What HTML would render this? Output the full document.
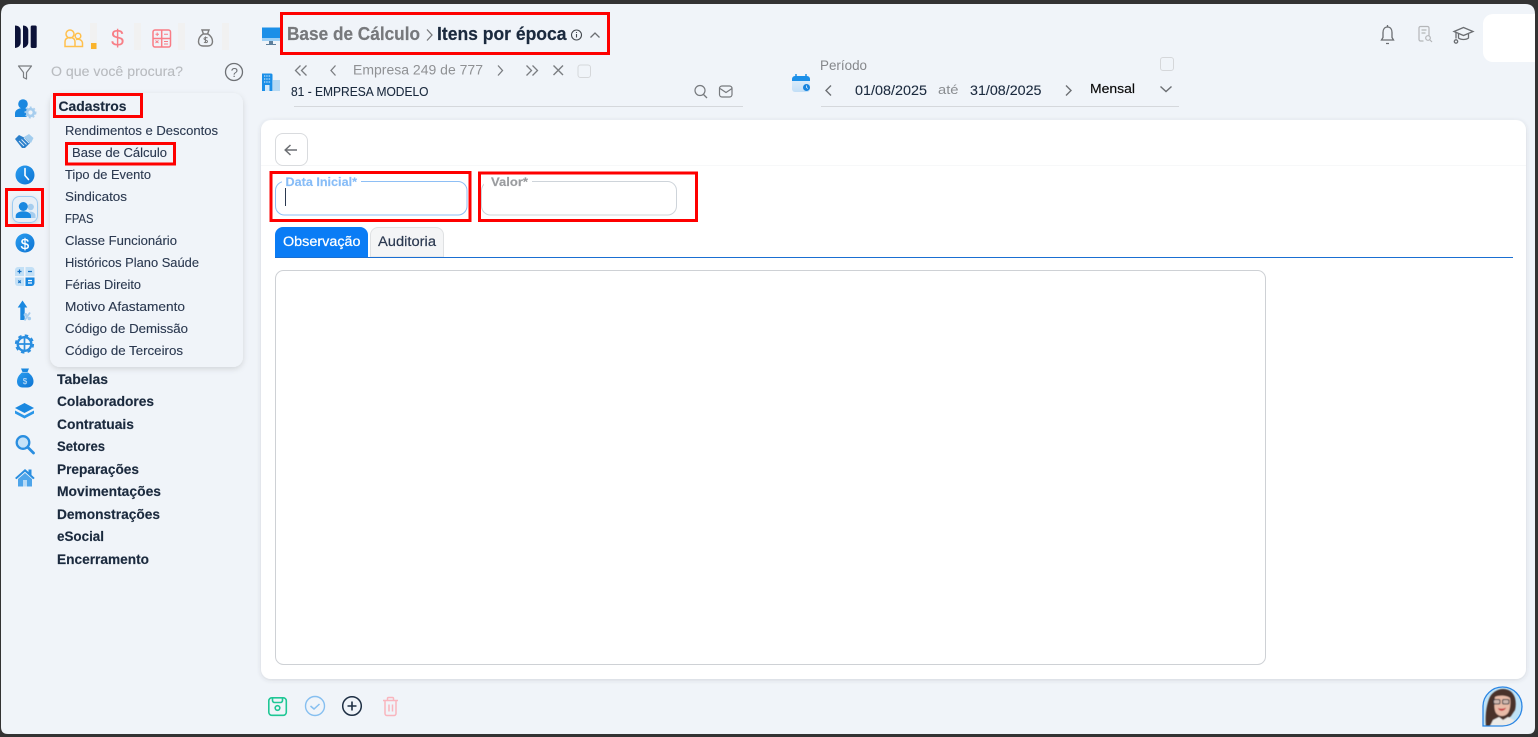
<!DOCTYPE html>
<html lang="pt-BR"><head><meta charset="utf-8"><title>Base de Cálculo</title>
<style>
html,body{margin:0;padding:0;width:1538px;height:737px;overflow:hidden;background:#333}
svg{display:block;position:absolute;left:0;top:0}
text{font-family:"Liberation Sans",sans-serif}
.b{font-weight:700;fill:#1b2a3e;font-size:13.5px;stroke:#1b2a3e;stroke-width:.15px}
.i{fill:#2b3950;font-size:12.8px;stroke:#2b3950;stroke-width:.12px}
.g{fill:#8a8d91;font-size:13.500px}
</style></head><body>
<svg width="1538" height="737" viewBox="0 0 1538 737" xmlns="http://www.w3.org/2000/svg">
<defs>
<linearGradient id="bl" x1="0" y1="0" x2="1" y2="1"><stop offset="0" stop-color="#2a9df0"/><stop offset="1" stop-color="#0f74d2"/></linearGradient>
<linearGradient id="cal" x1="0" y1="0" x2="0" y2="1"><stop offset="0" stop-color="#d9ebfa"/><stop offset="1" stop-color="#c2def6"/></linearGradient>
<filter id="sh" x="-10%" y="-10%" width="120%" height="120%"><feDropShadow dx="0" dy="2" stdDeviation="3" flood-color="#000" flood-opacity=".13"/></filter>
<filter id="sh2" x="-3%" y="-3%" width="106%" height="106%"><feDropShadow dx="0" dy="1" stdDeviation="2" flood-color="#445" flood-opacity=".18"/></filter>
<filter id="soft"><feGaussianBlur stdDeviation=".55"/></filter>
<clipPath id="av"><path d="M1483 726V706a19.500 19.500 0 1 1 19.500 20z"/></clipPath>
</defs>
<!-- page -->
<path d="M1 14Q1 4 11 4H1525Q1535 4 1535 14V727Q1535 734 1528 734H8Q1 734 1 727z" fill="#f0f4f9"/>

<!-- logo -->
<g fill="#0c1238">
<path d="M15 25.500c3.500 0 5.700 2 5.700 5v12c0 3-2.200 5-5.700 5.500z"/>
<path d="M23 25.500c3 0 5.300 2 5.300 5v12c0 2.500-2.300 5-5.300 5.500z"/>
<rect x="30.700" y="25.500" width="6" height="22.500" rx="1.500"/>
</g>

<!-- top module icons -->
<g fill="none" stroke="#ffc04d" stroke-width="1.500">
<circle cx="70" cy="34" r="4"/><circle cx="78" cy="36" r="2.800"/>
<path d="M65 46.500v-4.500c0-3 2-4.500 5-4.500s5 1.500 5 4.500v4.500zM76 39.500c4-.8 6.500 1 6.500 4v3h-7.500"/>
</g>
<rect x="90" y="23" width="7" height="27" fill="#f1f1f1"/><rect x="91" y="43" width="5.500" height="6" fill="#f9b32d"/>
<text x="111" y="46" font-size="23" fill="#f77f87" textLength="13" lengthAdjust="spacingAndGlyphs">$</text>
<rect x="134" y="23" width="7" height="27" fill="#f1f1f1"/>
<g fill="none" stroke="#f97c86" stroke-width="1.500">
<rect x="153" y="30" width="17.500" height="17" rx="2"/><path d="M153 38.500h17.500M161.700 30v17"/>
<path d="M155.500 34.300h3.500M157.200 32.500v3.500M164 34.300h4M155.500 43l3-2.500M155.500 40.500l3 2.500M164 41.500h4M164 44h4" stroke-width="1"/>
</g>
<rect x="178" y="23" width="7" height="27" fill="#f1f1f1"/>
<g fill="none" stroke="#7d7d7d" stroke-width="1.400">
<path d="M202 30h7l-1.500 4h-4zM203 34c-3 2-4.500 5-4.500 7.500 0 3 2 4.500 4.500 4.500h5c2.500 0 4.500-1.500 4.500-4.500 0-2.500-1.500-5.500-4.500-7.500"/>
<path d="M207.500 38c-.8-.8-3.500-.8-3.500.8s3.500 1 3.500 2.600-2.700 1.500-3.500.6M205.500 36.500v6.500" stroke-width="1"/>
</g>
<rect x="222" y="23" width="7" height="27" fill="#f1f1f1"/>

<!-- filter / search -->
<path d="M18.500 66h13l-5 6.500v6.500l-3-1.500v-5z" fill="none" stroke="#7b7e82" stroke-width="1.200" stroke-linejoin="round"/>
<text x="51" y="76" font-size="13.500" fill="#b8bbbf" stroke="#b8bbbf" stroke-width=".1" textLength="132" lengthAdjust="spacingAndGlyphs">O que você procura?</text>
<circle cx="234" cy="72" r="8.500" fill="none" stroke="#6f7276" stroke-width="1.300"/>
<text x="230.700" y="77" font-size="13" fill="#6f7276">?</text>

<!-- side icons -->
<g>
<circle cx="23" cy="104" r="4.800" fill="#1a88e0"/>
<path d="M15 117v-3.500c0-3.500 3.500-5.500 8-5.500 2 0 3.500.4 4.500 1.200-1.500 2-1.800 5.200-.5 7.800z" fill="#1a88e0"/>
<circle cx="30.500" cy="112.500" r="3.400" fill="none" stroke="#a6cdee" stroke-width="2.600"/>
<circle cx="30.500" cy="112.500" r="5.300" fill="none" stroke="#a6cdee" stroke-width="1.300" stroke-dasharray="2 2"/>
</g>
<g>
<path d="M15 139L19 135L27 139L30 143L25 148L22 148Z" fill="#2a7fcb"/>
<path d="M24 137L29 134L33.500 138L31 143L28 141Z" fill="#a3cdee"/>
<path d="M19 141l5 5M21.500 139.500l5 5M24 138l5 5" stroke="#dcebf8" stroke-width=".9"/>
</g>
<circle cx="25" cy="175" r="9.500" fill="url(#bl)"/>
<path d="M25 168.500v7l3.500 4" fill="none" stroke="#fff" stroke-width="1.600" stroke-linecap="round"/>

<!-- active -->
<rect x="12.500" y="196.500" width="25" height="26" rx="7" fill="#e7eff7" stroke="#9ccbf2" stroke-width="1" filter="url(#sh)"/>
<circle cx="30.700" cy="207" r="3.200" fill="#a6cdee"/>
<path d="M29 211.500c4 0 6.500 1.700 6.500 4v2.500h-5v-2c0-2-.5-3.500-1.500-4.500z" fill="#a6cdee"/>
<circle cx="23.300" cy="206.500" r="4.500" fill="#1a88e0"/>
<path d="M15.700 218v-2c0-3 3.400-4.800 7.600-4.800s7.700 1.800 7.700 4.800v2z" fill="#1a88e0"/>

<circle cx="25" cy="243" r="9.500" fill="url(#bl)"/>
<text x="20.700" y="248.800" font-size="15" fill="#fff" stroke="#fff" stroke-width=".3">$</text>

<g>
<path d="M15 270a3 3 0 0 1 3-3h6v9h-9z" fill="#c3e0f6"/>
<path d="M25.500 267h6a3 3 0 0 1 3 3v6h-9z" fill="#c3e0f6"/>
<path d="M15 277.500h9v8.500h-6a3 3 0 0 1-3-3z" fill="#c3e0f6"/>
<path d="M25.500 277.500h9v5.500a3 3 0 0 1-3 3h-6z" fill="#1a88e0"/>
<path d="M17.500 271.500h4M19.500 269.500v4M28 271.500h4M18.300 280.500l2.500 2.500M20.800 280.500l-2.500 2.500" stroke="#1270c5" stroke-width="1.200"/>
<path d="M28 280.500h4M28 283h4" stroke="#fff" stroke-width="1.200"/>
</g>
<g>
<path d="M22.500 300.500l4.800 7h-2.600v12.500h-4.400v-12.500h-2.600z" fill="#1a88e0"/>
<path d="M24.500 320.500l5.500-8" stroke="#a6cdee" stroke-width="1.800"/>
<circle cx="25.500" cy="314.800" r="1.800" fill="#a6cdee"/><circle cx="29.300" cy="318.500" r="1.800" fill="#a6cdee"/>
</g>
<g fill="none">
<circle cx="24.500" cy="344" r="6.800" stroke="#2a8ee0" stroke-width="2.400"/>
<circle cx="24.500" cy="344" r="8.600" stroke="#2a8ee0" stroke-width="2" stroke-dasharray="3.500 3.250"/>
<path d="M24.500 337v14M17.500 344h14" stroke="#2a8ee0" stroke-width="1.700"/>
</g>
<g>
<path d="M21 368.500h8l-1.500 3.500h-5z" fill="#1a88e0"/>
<path d="M22 372.500h6c3 2 5.500 5 5.500 9 0 4-3 6-6 6h-5c-3 0-5.500-2-5.500-6 0-4 2.500-7 5-9z" fill="url(#bl)"/>
<text x="22.700" y="384" font-size="8" fill="#cfe6f9">$</text>
</g>
<g>
<path d="M24.500 403l9.500 5-9.500 5-9.500-5z" fill="#1a88e0"/>
<path d="M15 410.500l9.500 5 9.500-5v3l-9.500 5-9.500-5z" fill="#2a96e8"/>
</g>
<g fill="none">
<circle cx="23" cy="442.500" r="6.300" stroke="#2a8ee0" stroke-width="2.300" fill="#c5e2f8"/>
<path d="M28 447.500l5.500 5.500" stroke="#2a8ee0" stroke-width="2.800" stroke-linecap="round"/>
</g>
<g>
<path d="M15 478l10-9 3.500 3v-2.500h3v5.500l3.200 3-1.500 1.200-8.200-7.500-8.500 7.500z" fill="#2a8ee0"/>
<path d="M18 479l7-6 7 6v7.500h-14z" fill="#4fa5ea"/>
<rect x="23" y="480" width="4" height="6.500" fill="#b7daf6"/>
</g>

<!-- menu bold -->
<g class="menu">
<text class="b" x="57" y="384" textLength="51" lengthAdjust="spacingAndGlyphs">Tabelas</text>
<text class="b" x="57" y="406" textLength="97" lengthAdjust="spacingAndGlyphs">Colaboradores</text>
<text class="b" x="57" y="429" textLength="77" lengthAdjust="spacingAndGlyphs">Contratuais</text>
<text class="b" x="57" y="451" textLength="48" lengthAdjust="spacingAndGlyphs">Setores</text>
<text class="b" x="57" y="474" textLength="82" lengthAdjust="spacingAndGlyphs">Preparações</text>
<text class="b" x="57" y="496" textLength="104" lengthAdjust="spacingAndGlyphs">Movimentações</text>
<text class="b" x="57" y="519" textLength="103" lengthAdjust="spacingAndGlyphs">Demonstrações</text>
<text class="b" x="57" y="541" textLength="47" lengthAdjust="spacingAndGlyphs">eSocial</text>
<text class="b" x="57" y="564" textLength="92" lengthAdjust="spacingAndGlyphs">Encerramento</text>
</g>

<!-- popup -->
<rect x="50" y="93" width="193" height="274" rx="10" fill="#f0f4f9" filter="url(#sh)"/>
<text class="b" x="58.500" y="111" textLength="68" lengthAdjust="spacingAndGlyphs">Cadastros</text>
<text class="i" x="65" y="135" textLength="153" lengthAdjust="spacingAndGlyphs">Rendimentos e Descontos</text>
<text class="i" x="72" y="157" textLength="95" lengthAdjust="spacingAndGlyphs">Base de Cálculo</text>
<text class="i" x="65" y="179" textLength="86" lengthAdjust="spacingAndGlyphs">Tipo de Evento</text>
<text class="i" x="65" y="201" textLength="62" lengthAdjust="spacingAndGlyphs">Sindicatos</text>
<text class="i" x="65" y="223" textLength="28.500" lengthAdjust="spacingAndGlyphs">FPAS</text>
<text class="i" x="65" y="245" textLength="112" lengthAdjust="spacingAndGlyphs">Classe Funcionário</text>
<text class="i" x="65" y="267" textLength="134" lengthAdjust="spacingAndGlyphs">Históricos Plano Saúde</text>
<text class="i" x="65" y="289" textLength="76" lengthAdjust="spacingAndGlyphs">Férias Direito</text>
<text class="i" x="65" y="311" textLength="120" lengthAdjust="spacingAndGlyphs">Motivo Afastamento</text>
<text class="i" x="65" y="333" textLength="123" lengthAdjust="spacingAndGlyphs">Código de Demissão</text>
<text class="i" x="65" y="355" textLength="118" lengthAdjust="spacingAndGlyphs">Código de Terceiros</text>

<!-- header -->
<path d="M262 27.500h18v13.500h-18z" fill="#1b8fe8"/><path d="M262 38h18v3h-18z" fill="#9ccff5"/>
<path d="M269 41h4v3h3v1h-10v-1h3z" fill="#5d7f9c"/>
<text x="287" y="40" font-size="18" font-weight="700" fill="#77797c" stroke="#77797c" stroke-width=".2" textLength="133" lengthAdjust="spacingAndGlyphs">Base de Cálculo</text>
<path d="M427 29.500l5 5.500-5 5.500" fill="none" stroke="#77797c" stroke-width="1.300"/>
<text x="437" y="40" font-size="18" font-weight="700" fill="#1b2a3e" stroke="#1b2a3e" stroke-width=".2" textLength="129.500" lengthAdjust="spacingAndGlyphs">Itens por época</text>
<circle cx="576.500" cy="35" r="5" fill="none" stroke="#454a50" stroke-width="1.100"/><path d="M576.500 34v3.500M576.500 32v1" stroke="#454a50" stroke-width="1.100"/>
<path d="M590.500 37.500l4.500-4.500 4.500 4.500" fill="none" stroke="#6b6e72" stroke-width="1.300"/>

<!-- building -->
<path d="M262 73.500h9a1.500 1.500 0 0 1 1.500 1.500v16h-10.500z" fill="#1b8fe8"/>
<path d="M273 80h7v11h-7z" fill="#b5d9f4"/>
<path d="M264 76h7M264 79h7M264 82h7" stroke="#bfe0f8" stroke-width="1.300" stroke-dasharray="1.300 1"/><rect x="265" y="85" width="4.500" height="6" fill="#d6eafa"/>

<!-- empresa nav -->
<g fill="none" stroke="#7a7d81" stroke-width="1.300">
<path d="M300.500 65.500l-5 5 5 5M306.500 65.500l-5 5 5 5M335.500 65.500l-4.500 5 4.500 5M498 65.500l4.500 5-4.500 5M526.500 65.500l5 5-5 5M532.500 65.500l5 5-5 5"/>
<path d="M553.500 65.500l9.500 9.500M563 65.500l-9.500 9.500" stroke-width="1.400"/>
<rect x="578" y="65" width="12.500" height="12.500" rx="2.500" stroke="#d5d7da" stroke-width="1"/>
</g>
<text class="g" x="353" y="74.500" textLength="130" lengthAdjust="spacingAndGlyphs" style="fill:#8f9194">Empresa 249 de 777</text>
<text x="291" y="96" font-size="13.200" fill="#1b2a3e" stroke="#1b2a3e" stroke-width=".1" textLength="137.500" lengthAdjust="spacingAndGlyphs">81 - EMPRESA MODELO</text>
<circle cx="700" cy="90.500" r="5" fill="none" stroke="#777a7e" stroke-width="1.200"/><path d="M703.500 94.500l3.500 3.500" stroke="#777a7e" stroke-width="1.300"/>
<rect x="719.500" y="86" width="12.500" height="11" rx="2.500" fill="none" stroke="#777a7e" stroke-width="1.200"/><path d="M720 88.500l6 4 6-4" fill="none" stroke="#777a7e" stroke-width="1.200"/>
<path d="M294 106.500h449M821 106.500h358" stroke="#d5d8dc" stroke-width="1"/>

<!-- period -->
<path d="M792 81h18v8a3 3 0 0 1-3 3h-12a3 3 0 0 1-3-3z" fill="url(#cal)"/>
<path d="M792 79a3 3 0 0 1 3-3h12a3 3 0 0 1 3 3v2h-18z" fill="#1b8fe8"/>
<path d="M796 74v3M806 74v3" stroke="#1b8fe8" stroke-width="1.500"/>
<circle cx="806.500" cy="87.500" r="3.500" fill="#1583de"/>
<path d="M806.500 85.500v2l1.300 1" fill="none" stroke="#fff" stroke-width=".7"/>
<text class="g" x="820" y="70" textLength="47" lengthAdjust="spacingAndGlyphs" style="fill:#85878b">Período</text>
<rect x="1160.500" y="57.500" width="13" height="13" rx="2.500" fill="none" stroke="#d5d7da"/>
<g fill="none" stroke="#6c6f73" stroke-width="1.400">
<path d="M831 85.500l-5 5 5 5M1066 85.500l5 5-5 5M1160.500 86.500l5.500 5 5.500-5"/>
</g>
<text x="855" y="95" font-size="13.500" fill="#1b2a3e" stroke="#1b2a3e" stroke-width=".1" textLength="72" lengthAdjust="spacingAndGlyphs">01/08/2025</text>
<text x="938" y="94" font-size="13" fill="#8a8d91" textLength="20.500" lengthAdjust="spacingAndGlyphs">até</text>
<text x="970" y="95" font-size="13.500" fill="#1b2a3e" stroke="#1b2a3e" stroke-width=".1" textLength="71.500" lengthAdjust="spacingAndGlyphs">31/08/2025</text>
<text x="1090" y="93" font-size="13" fill="#0a0a0a" stroke="#0a0a0a" stroke-width=".15" textLength="45" lengthAdjust="spacingAndGlyphs">Mensal</text>

<!-- top right -->
<g fill="none" stroke="#6b6e72" stroke-width="1.300">
<path d="M1387.500 27c3 0 4.500 2.500 4.500 5.500v5l1.500 2.500h-12l1.500-2.500v-5c0-3 1.500-5.500 4.500-5.500z"/>
<path d="M1386 43.500h3M1387.500 25v2"/>
</g>
<g fill="none" stroke="#b4b6b9" stroke-width="1.200">
<path d="M1429 36v-8a1.500 1.500 0 0 0-1.500-1.500h-7a1.500 1.500 0 0 0-1.500 1.500v11.500a1.500 1.500 0 0 0 1.500 1.500h3"/>
<path d="M1421.500 30h5M1421.500 33h4"/><circle cx="1428" cy="38" r="2.300"/><path d="M1430 40l2 2"/>
</g>
<g fill="none" stroke="#6b6e72" stroke-width="1.300">
<path d="M1463.500 27.500l9.500 4-9.500 4-9.500-4z"/>
<path d="M1458.500 34v4c2.500 2 7.500 2 10 0v-4"/><path d="M1456 32.500v6"/><circle cx="1456" cy="41.500" r="1.700"/>
</g>
<path d="M1483 24a10 10 0 0 1 10-10h42v48h-42a10 10 0 0 1-10-10z" fill="#fff"/>

<!-- card -->
<rect x="261" y="120" width="1265" height="559" rx="10" fill="#fff" filter="url(#sh2)"/>
<path d="M261 165.500h1265" stroke="#f7f8f9"/>
<rect x="275.500" y="133.500" width="32" height="32" rx="7.500" fill="#fff" stroke="#d9dbde"/>
<path d="M285 150h12M290.500 145l-5.300 5 5.300 5" fill="none" stroke="#6c6f73" stroke-width="1.500"/>

<!-- inputs -->
<rect x="275.500" y="181.500" width="191.500" height="33.500" rx="9" fill="#fff" stroke="#8ebff5"/>
<rect x="282" y="176" width="79" height="10" fill="#fff"/>
<text x="285.500" y="186" font-size="11.500" font-weight="700" fill="#88bdf7" stroke="#88bdf7" stroke-width=".15" textLength="71.500" lengthAdjust="spacingAndGlyphs">Data Inicial*</text>
<path d="M285.500 188v18" stroke="#2b3950" stroke-width="1"/>
<rect x="481.500" y="181.500" width="195" height="33.500" rx="9" fill="#fff" stroke="#ced4da"/>
<rect x="484" y="176" width="48" height="10" fill="#fff"/>
<text x="491" y="186" font-size="11.500" font-weight="700" fill="#9a9c9f" stroke="#9a9c9f" stroke-width=".15" textLength="37" lengthAdjust="spacingAndGlyphs">Valor*</text>

<!-- tabs -->
<path d="M275 257v-22a8 8 0 0 1 8-8h77a8 8 0 0 1 8 8v22z" fill="#0a7cf5"/>
<text x="283" y="246" font-size="13.500" fill="#fff" stroke="#fff" stroke-width=".25" textLength="77.500" lengthAdjust="spacingAndGlyphs">Observação</text>
<path d="M370.500 257v-22a7.500 7.500 0 0 1 7.500-7.500h58a7.500 7.500 0 0 1 7.500 7.500v22z" fill="#f4f5f6" stroke="#dfe1e3"/>
<text x="378" y="246" font-size="13.500" fill="#2b3950" stroke="#2b3950" stroke-width=".2" textLength="58" lengthAdjust="spacingAndGlyphs">Auditoria</text>
<path d="M275 257.500h1238" stroke="#1a6fd2" stroke-width="1"/>
<rect x="275.500" y="270.500" width="990" height="394" rx="8" fill="#fff" stroke="#ced1d5"/>

<!-- bottom -->
<g fill="none" stroke="#1fc795" stroke-width="1.600">
<rect x="268.800" y="697.800" width="17.500" height="17.500" rx="3"/>
<path d="M272.500 698v2.500a2 2 0 0 0 2 2h6a2 2 0 0 0 2-2v-2.500"/><circle cx="277.500" cy="708" r="2.300"/>
</g>
<circle cx="315" cy="706" r="9.500" fill="none" stroke="#86bff0" stroke-width="1.400"/><path d="M310.500 706l3.500 3 5.500-5" fill="none" stroke="#86bff0" stroke-width="1.500"/>
<circle cx="352" cy="706" r="9.300" fill="none" stroke="#1e2f44" stroke-width="1.500"/><path d="M352 701.500v9M347.500 706h9" stroke="#1e2f44" stroke-width="1.600"/>
<g fill="none" stroke="#f9b5be" stroke-width="1.500">
<path d="M383 700.500h15M387.500 700.500v-2a1 1 0 0 1 1-1h4a1 1 0 0 1 1 1v2M385 700.500v13a2 2 0 0 0 2 2h7a2 2 0 0 0 2-2v-13M389 704.500v7M392.500 704.500v7"/>
</g>

<!-- avatar -->
<g clip-path="url(#av)">
<rect x="1483" y="686" width="40" height="41" fill="#bfe3f7"/>
<g filter="url(#soft)">
<path d="M1486 727c-1-10 0-20 3-28 2-6 8-10 14-10 6 0 10 3 12 9 1 4 1 8 0 12l-4 6-12 11z" fill="#4a332c"/>
<path d="M1495 697c3-2 12-2 15 1 1 5 0 12-2 15-3 4-9 4-12 0-2-3-2-11-1-16z" fill="#e8bba7"/>
<rect x="1493.500" y="699.500" width="6.500" height="4.500" rx="1.500" fill="#cdb6ae" stroke="#33363c" stroke-width="1"/>
<rect x="1502.500" y="699.500" width="6.500" height="4.500" rx="1.500" fill="#cdb6ae" stroke="#33363c" stroke-width="1"/>
<path d="M1498 708c2 1 6 1 8-.5-1 4-7 4.500-8 .5z" fill="#c63a3f"/>
<path d="M1489 728l4-8 6-3 4 3 5-3 6 3 2 8z" fill="#ecebe8"/>
</g>
</g>
<path d="M1483 726V706a19.500 19.500 0 1 1 19.500 20z" fill="none" stroke="#2b86e4" stroke-width="1.300"/>

<!-- red annotations -->
<g fill="none" stroke="#fe0000" stroke-width="3">
<rect x="281.500" y="13.500" width="327" height="40"/>
<rect x="54.500" y="94.500" width="87" height="22"/>
<rect x="66.500" y="143.500" width="108" height="20.500"/>
<rect x="6.500" y="189.500" width="36" height="36"/>
<rect x="271" y="172.500" width="199" height="48"/>
<rect x="479.500" y="173" width="217" height="47.500"/>
</g>
</svg>
</body></html>
